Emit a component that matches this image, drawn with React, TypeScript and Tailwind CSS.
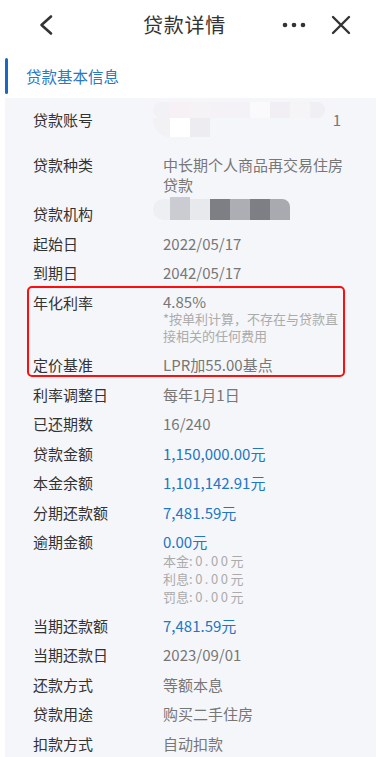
import React from "react";

const Label = ({ children }: { children: React.ReactNode }) => (
  <div className="w-[130px] shrink-0 text-[15px] leading-[20px] text-[#333]">{children}</div>
);

const Row = ({
  label,
  children,
  className = "",
}: {
  label: string;
  children?: React.ReactNode;
  className?: string;
}) => (
  <div className={"flex pl-[28px] pr-[28px] py-[4.75px] " + className}>
    <Label>{label}</Label>
    <div className="flex-1 min-w-0 text-[15px] leading-[20px] text-[#777]">{children}</div>
  </div>
);

const Blue = ({ children }: { children: React.ReactNode }) => (
  <span className="text-[#2277c4]">{children}</span>
);

const Sub = ({ k, v }: { k: string; v: string }) => (
  <div className="text-[13px] leading-[18px] text-[#ababab]">
    {k}
    <span className="tracking-[2.5px]">:{v}</span>元
  </div>
);

export default function App() {
  return (
    <div className="w-[381px] h-[757px] overflow-hidden bg-white flex flex-col font-['Noto_Sans_CJK_SC','Noto_Sans',sans-serif]">
      {/* nav */}
      <div className="h-[50px] shrink-0 flex items-center">
        <div className="w-[143px] shrink-0 pl-[38px] flex items-center">
          <svg width="16" height="22" viewBox="0 0 16 22" fill="none">
            <path d="M13 2.5 L3.5 11 L13 19.5" stroke="#333" strokeWidth="2.6" strokeLinecap="round" strokeLinejoin="round" />
          </svg>
        </div>
        <div className="text-[20px] leading-[28px] text-[#333] tracking-[0.75px]">贷款详情</div>
        <div className="ml-auto flex items-center gap-[25px] pr-[30px]">
          <svg width="24" height="6" viewBox="0 0 24 6">
            <circle cx="3" cy="3" r="2.3" fill="#333" />
            <circle cx="12" cy="3" r="2.3" fill="#333" />
            <circle cx="21" cy="3" r="2.3" fill="#333" />
          </svg>
          <svg width="20" height="20" viewBox="0 0 20 20" fill="none">
            <path d="M2 2 L18 18 M18 2 L2 18" stroke="#333" strokeWidth="2.4" strokeLinecap="round" />
          </svg>
        </div>
      </div>

      {/* section header */}
      <div className="mt-[8px] h-[36px] shrink-0 flex items-center">
        <div className="ml-[5px] w-[3px] h-full rounded-full bg-[#1a68c2]" />
        <div className="ml-[18px] text-[15.5px] leading-[20px] text-[#2a78c2]">贷款基本信息</div>
      </div>

      {/* card */}
      <div className="mt-[4px] mx-[5px] flex-1 bg-[#f5f6fa] pt-[7px]">
        {/* account row */}
        <div className="relative h-[45px] flex pl-[28px] pr-[28px] pt-[4.75px]">
          <Label>贷款账号</Label>
          <div className="flex-1 flex justify-end pr-[7px] text-[15px] leading-[20px] text-[#777]">1</div>
          <div className="absolute left-[148px] top-[-3px] flex flex-col">
            <div className="flex h-[16px]">
              <div className="w-[17px] bg-[#f2f1f5] rounded-l-full" />
              <div className="w-[20px] bg-[#f7f0f5]" />
              <div className="w-[20px] bg-[#f6f3f7]" />
              <div className="w-[40px] bg-[#f4f2f6]" />
              <div className="w-[20px] bg-[#fafafc]" />
              <div className="w-[20px] bg-[#f2eff4]" />
              <div className="w-[20px] bg-[#f5f4f7]" />
              <div className="w-[15px] bg-[#f0eff3] rounded-r-full" />
            </div>
            <div className="flex h-[19px]">
              <div className="w-[17px] bg-[#f2f2f5] rounded-bl-full" />
              <div className="w-[20px] bg-[#ffffff]" />
              <div className="w-[20px] bg-[#ededf1]" />
            </div>
          </div>
        </div>

        <Row label="贷款种类">
          <div>中长期个人商品再交易住房</div>
          <div>贷款</div>
        </Row>

        <div className="relative">
          <Row label="贷款机构" />
          <div className="absolute left-[148px] top-[-3px] flex items-end h-[23px]">
            <div className="w-[17px] h-[21px] bg-[#eeeff2] rounded-l-full" />
            <div className="w-[20px] h-[23px] bg-[#cbccd1]" />
            <div className="w-[20px] h-[21px] bg-[#e8e9ed]" />
            <div className="w-[20px] h-[21px] bg-[#7e7f84]" />
            <div className="w-[20px] h-[21px] bg-[#adaeb3]" />
            <div className="w-[20px] h-[21px] bg-[#7e7f84]" />
            <div className="w-[20px] h-[21px] bg-[#a9aaaf] rounded-tr-[8px]" />
          </div>
        </div>

        <Row label="起始日">2022/05/17</Row>
        <Row label="到期日">2042/05/17</Row>

        <div className="relative">
          <Row label="年化利率">
            <div className="leading-[17px]">4.85%</div>
            <div className="mb-[2px] text-[13px] leading-[17px] text-[#ababab]">
              <div className="whitespace-nowrap">*按单利计算，不存在与贷款直</div>
              <div>接相关的任何费用</div>
            </div>
          </Row>
          <Row label="定价基准">LPR加55.00基点</Row>
          <div className="absolute left-[22px] right-[31px] top-[-2px] bottom-[3px] border-2 border-[#ff0d0d] rounded-[5px] pointer-events-none" />
        </div>

        <Row label="利率调整日">每年1月1日</Row>
        <Row label="已还期数">16/240</Row>
        <Row label="贷款金额">
          <Blue>1,150,000.00元</Blue>
        </Row>
        <Row label="本金余额">
          <Blue>1,101,142.91元</Blue>
        </Row>
        <Row label="分期还款额">
          <Blue>7,481.59元</Blue>
        </Row>
        <Row label="逾期金额">
          <div>
            <Blue>0.00元</Blue>
          </div>
          <Sub k="本金" v="0.00" />
          <Sub k="利息" v="0.00" />
          <Sub k="罚息" v="0.00" />
        </Row>
        <Row label="当期还款额">
          <Blue>7,481.59元</Blue>
        </Row>
        <Row label="当期还款日">2023/09/01</Row>
        <Row label="还款方式">等额本息</Row>
        <Row label="贷款用途">购买二手住房</Row>
        <Row label="扣款方式">自动扣款</Row>
      </div>
    </div>
  );
}
